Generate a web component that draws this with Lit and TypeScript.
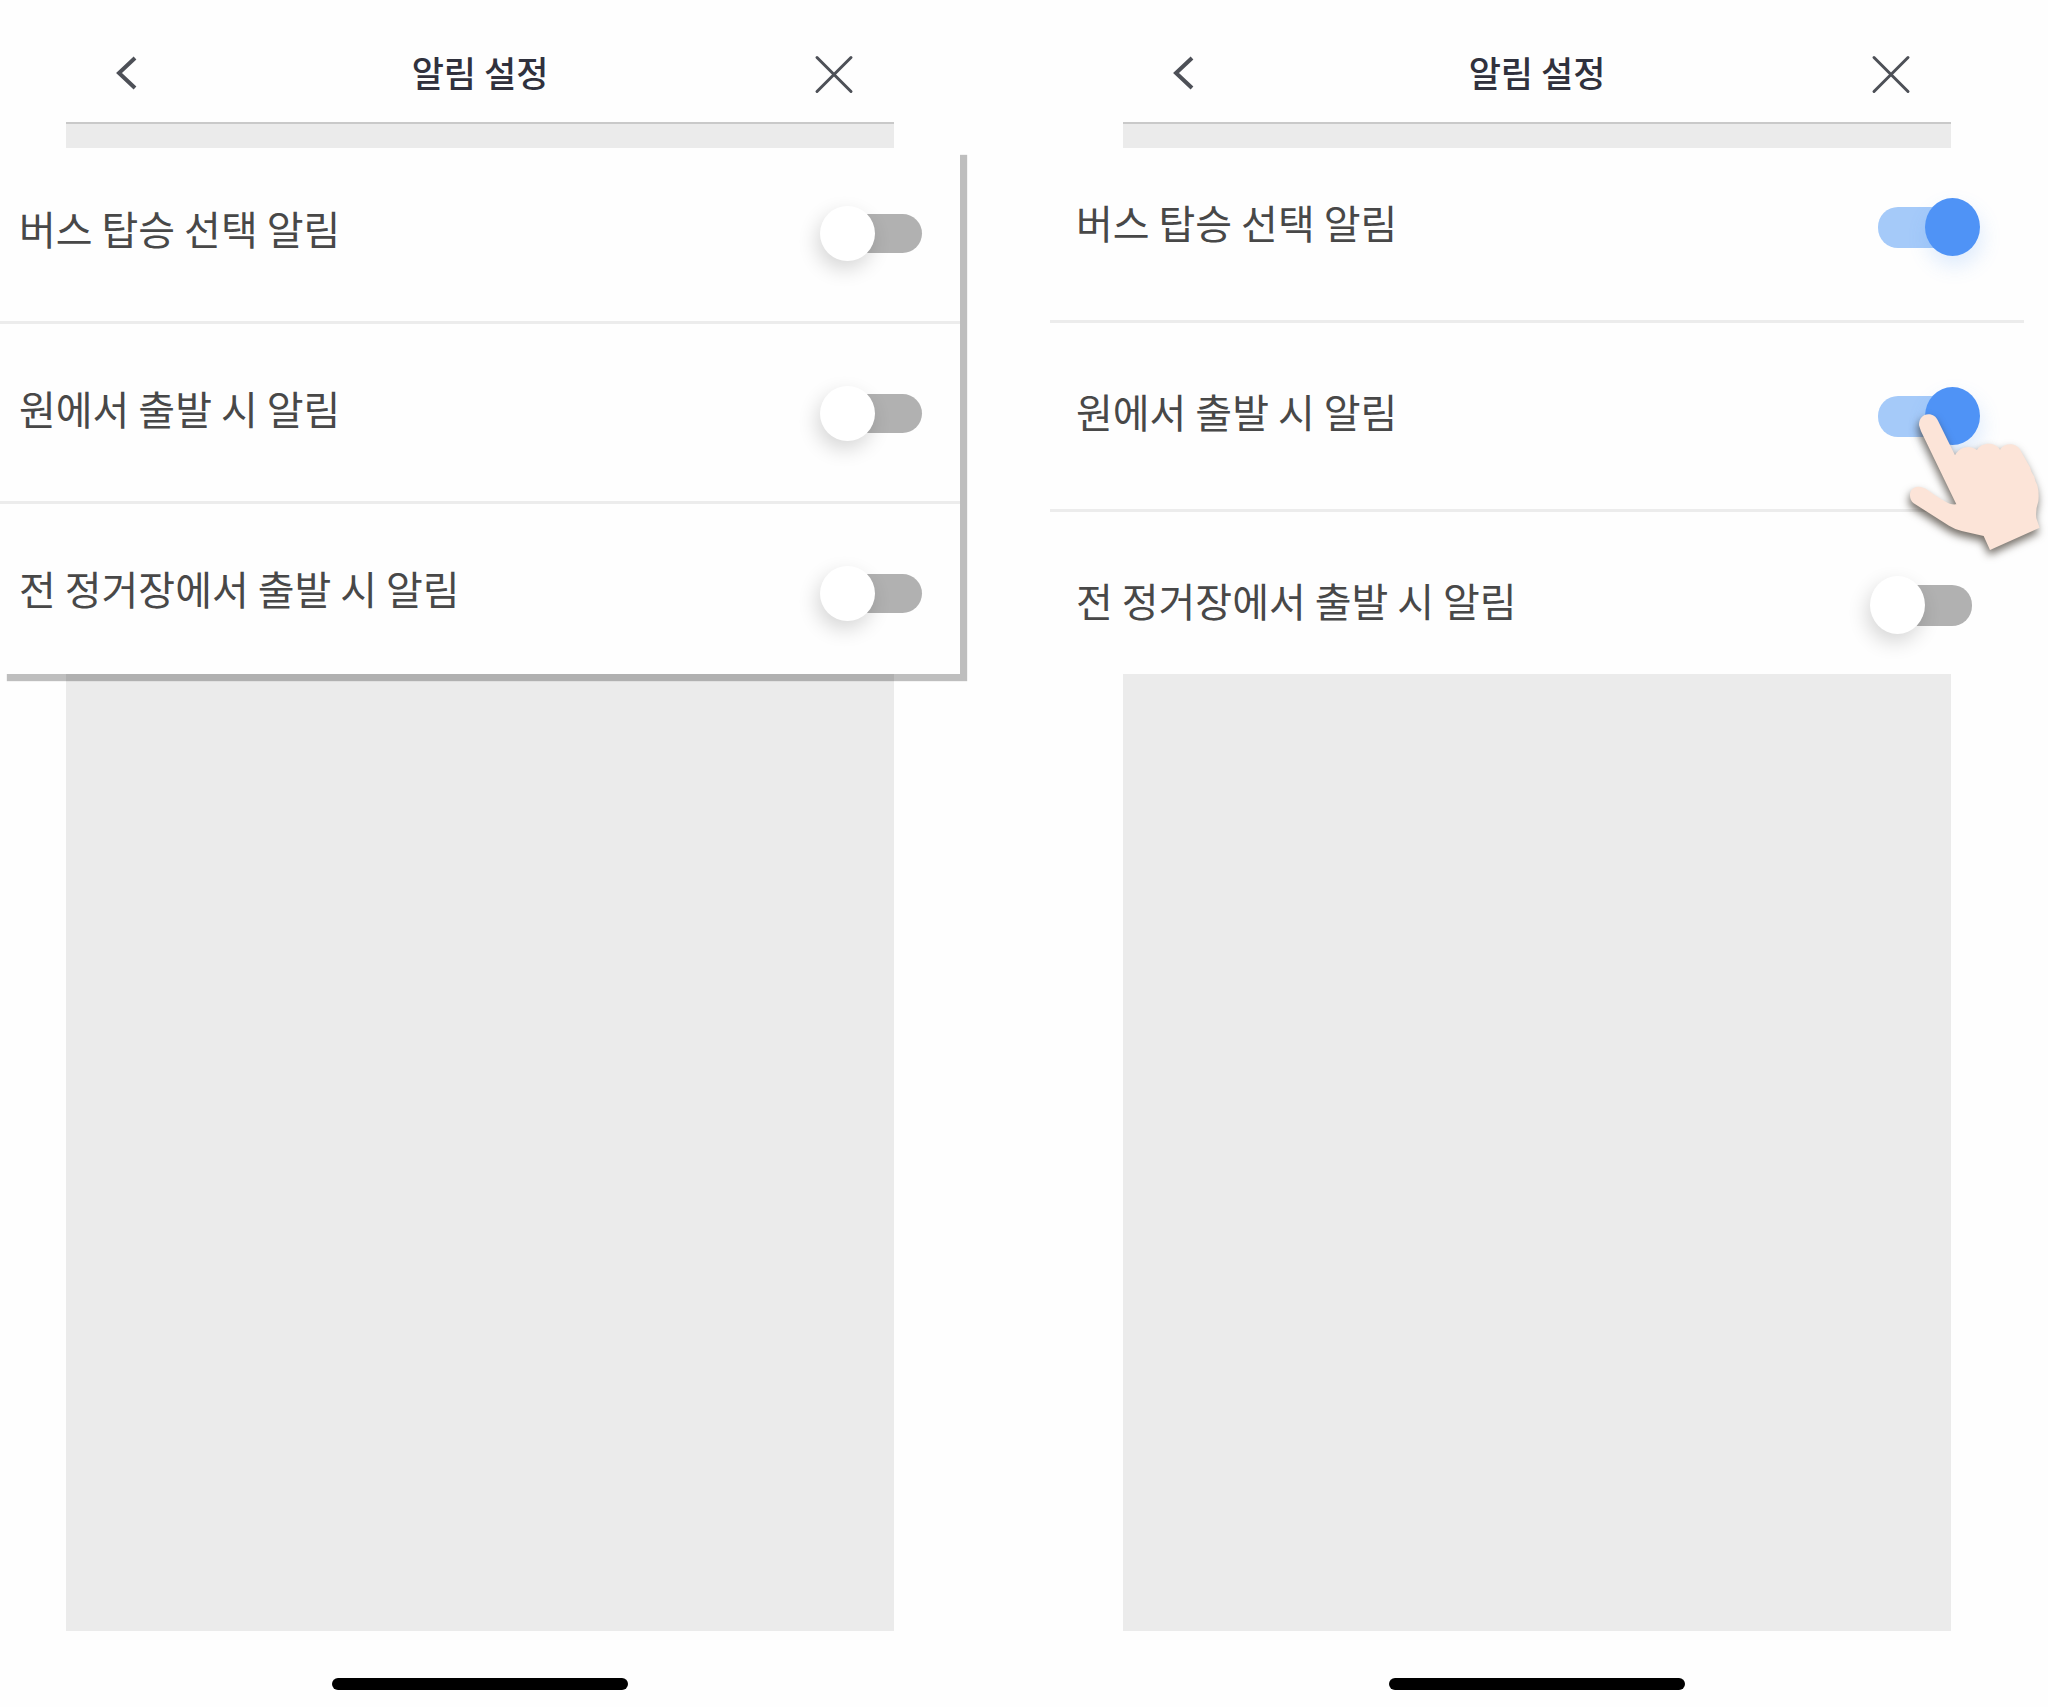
import { LitElement, html, svg, css } from "lit";
import { customElement, property } from "lit/decorators.js";
import { classMap } from "lit/directives/class-map.js";

interface Setting {
  id: string;
  label: string;
  on: boolean;
  pointer?: boolean;
}

const handIcon = svg`
  <path d="M358 196 C357 178 369 163 386 163 C400 163 409 170 415 182 L466 286
    C478 262 508 252 532 270 C546 245 586 245 601 269
    C616 246 654 247 665 276 L691 322 Q694 338 704 350 Q706 364 713 376
    Q719 400 716 424 Q707 450 710 475 L720 503 L571 570 L552 528
    L486 513 Q466 508 448 497 L342 430 C326 418 326 386 350 381
    C374 377 392 398 410 408 C430 420 448 436 470 433 L364 214 Z"></path>`;

@customElement("toggle-row")
class ToggleRow extends LitElement {
  static styles = css`
    :host {
      display: block;
    }
    .row {
      position: relative;
      display: flex;
      align-items: center;
      justify-content: space-between;
      padding: var(--row-top) var(--row-right) var(--row-bottom) var(--row-left);
    }
    .label {
      flex: 1;
      padding-bottom: 10px;
      font-size: 40px;
      line-height: 56px;
      color: #484848;
    }
    .switch {
      appearance: none;
      display: grid;
      align-items: center;
      flex: none;
      width: 110px;
      height: var(--knob-height);
      margin: 0;
      cursor: pointer;
    }
    .switch::before,
    .switch::after {
      content: "";
      grid-area: 1 / 1;
    }
    .switch::before {
      justify-self: center;
      width: 94px;
      height: var(--track-height);
      border-radius: 20px;
      background: #b1b1b1;
    }
    .switch::after {
      z-index: 1;
      justify-self: start;
      width: 55px;
      height: var(--knob-height);
      border-radius: 50%;
      background: #fff;
      box-shadow: -3px 8px 20px rgba(0, 0, 0, 0.16);
    }
    .switch:checked::before {
      background: #a5caf9;
    }
    .switch:checked::after {
      justify-self: end;
      background: #4f93f6;
      box-shadow: 2px 10px 20px rgba(79, 147, 246, 0.18);
    }
    .hand {
      position: absolute;
      top: 87px;
      right: -22px;
      width: 143px;
      height: 150px;
      z-index: 2;
      fill: #fce4d8;
      overflow: visible;
      pointer-events: none;
      filter: drop-shadow(-1px 5px 4px rgba(40, 30, 20, 0.65));
    }
  `;

  @property({ attribute: false }) setting!: Setting;

  render() {
    const { id, label, on, pointer } = this.setting;
    return html`
      <div class="row">
        <label class="label" for=${id}>${label}</label>
        <input class="switch" id=${id} type="checkbox" role="switch" .checked=${on} />
        ${pointer
          ? html`<svg class="hand" viewBox="310 150 429 450" aria-hidden="true">${handIcon}</svg>`
          : null}
      </div>
    `;
  }
}

@customElement("settings-screen")
class SettingsScreen extends LitElement {
  static styles = css`
    :host {
      display: flex;
      min-width: 0;
    }
    .screen {
      flex: 1;
      display: flex;
      flex-direction: column;
      --gutter: 66px;
      --list-inset: 0px;
      --first-top: 52px;
      --mid-top: 56px;
      --mid-bottom: 55px;
      --last-bottom: 48px;
      --row-left: 19px;
      --row-right: 30px;
      --knob-height: 55px;
      --track-height: 39px;
    }
    .screen.wide {
      --gutter: 97px;
      --list-inset: 24px;
      --first-top: 46px;
      --mid-top: 60px;
      --mid-bottom: 60px;
      --last-bottom: 36px;
      --row-left: 26px;
      --row-right: 44px;
      --knob-height: 58px;
      --track-height: 41px;
    }
    .header {
      display: grid;
      grid-template-columns: 1fr auto 1fr;
      align-items: center;
      margin: 0 var(--gutter);
      padding: 48px 38px 22px;
    }
    .title {
      margin: 0;
      padding-bottom: 4px;
      font-size: 35px;
      font-weight: 500;
      line-height: 48px;
      color: #30313d;
    }
    .icon-button {
      display: flex;
      padding: 0;
      border: 0;
      background: none;
      cursor: pointer;
    }
    .close {
      justify-self: end;
    }
    .icon {
      fill: none;
      stroke: #4d5057;
    }
    .band {
      height: 24px;
      margin: 0 var(--gutter);
      border-top: 2px solid #c9c9c9;
      background: #ebebeb;
    }
    .list {
      position: relative;
      z-index: 1;
      margin: 0 var(--list-inset);
      padding: 0;
      list-style: none;
    }
    .raised {
      background: #fefefe;
      box-shadow: 7px 7px 1px rgba(0, 0, 0, 0.25);
    }
    .item {
      --row-top: var(--mid-top);
      --row-bottom: var(--mid-bottom);
      border-bottom: 3px solid #ececec;
    }
    .item:first-child {
      --row-top: var(--first-top);
    }
    .item:last-child {
      --row-bottom: var(--last-bottom);
      border-bottom: 0;
    }
    .filler {
      flex: 1;
      margin: 0 var(--gutter);
      background: #ebebeb;
    }
    .footer {
      display: flex;
      justify-content: center;
      padding: 47px 0 17px;
    }
    .home {
      width: 296px;
      height: 12px;
      border-radius: 6px;
      background: #000;
    }
  `;

  @property({ type: Boolean }) wide = false;
  @property({ attribute: false }) settings: Setting[] = [];

  render() {
    return html`
      <section class=${classMap({ screen: true, wide: this.wide })}>
        <header class="header">
          <button class="icon-button" type="button" aria-label="뒤로">
            <svg class="icon" width="44" height="44" viewBox="0 0 44 44" stroke-width="4">
              <path d="M31 6 L15 21 L31 36"></path>
            </svg>
          </button>
          <h1 class="title">알림 설정</h1>
          <button class="icon-button close" type="button" aria-label="닫기">
            <svg class="icon" width="44" height="44" viewBox="0 0 44 44" stroke-width="3" stroke-linecap="round">
              <path d="M5 5.5 L39 39.5 M39 5.5 L5 39.5"></path>
            </svg>
          </button>
        </header>
        <div class="band"></div>
        <ul class=${classMap({ list: true, raised: !this.wide })}>
          ${this.settings.map(
            (s) => html`<li class="item"><toggle-row .setting=${s}></toggle-row></li>`
          )}
        </ul>
        <div class="filler"></div>
        <footer class="footer"><div class="home"></div></footer>
      </section>
    `;
  }
}

@customElement("app-root")
class AppRoot extends LitElement {
  static styles = css`
    :host {
      display: block;
      background: #fefefe;
      font-family: "Noto Sans CJK KR", "Noto Sans", sans-serif;
    }
    .page {
      display: grid;
      grid-template-columns: 960fr 1022fr;
      column-gap: 66px;
      min-height: 100vh;
      overflow: hidden;
    }
  `;

  private build(on: boolean): Setting[] {
    return [
      { id: "board", label: "버스 탑승 선택 알림", on },
      { id: "depart", label: "원에서 출발 시 알림", on, pointer: on },
      { id: "previous", label: "전 정거장에서 출발 시 알림", on: false },
    ];
  }

  render() {
    return html`
      <main class="page">
        <settings-screen .settings=${this.build(false)}></settings-screen>
        <settings-screen wide .settings=${this.build(true)}></settings-screen>
      </main>
    `;
  }
}
